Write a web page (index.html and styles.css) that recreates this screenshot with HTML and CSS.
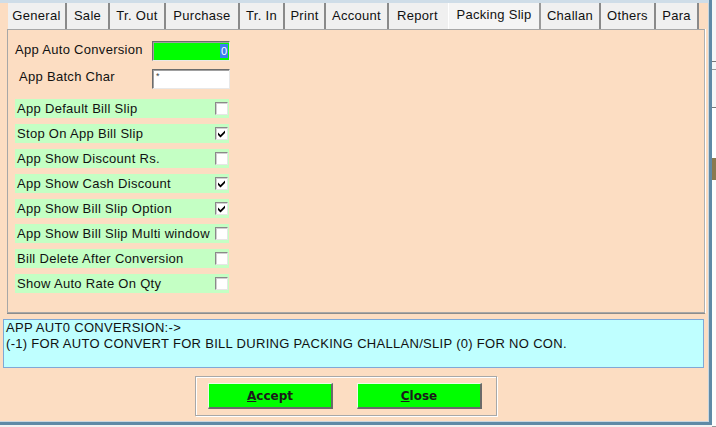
FILE: index.html
```html
<!DOCTYPE html>
<html>
<head>
<meta charset="utf-8">
<link rel="stylesheet" href="styles.css">
</head>
<body>
<div class="screen">
  <div class="window">
    <div class="topstrip"></div>
    <div class="tabs">
      <div class="tab t1">General</div>
      <div class="tab t2">Sale</div>
      <div class="tab t3">Tr. Out</div>
      <div class="tab t4">Purchase</div>
      <div class="tab t5">Tr. In</div>
      <div class="tab t6">Print</div>
      <div class="tab t7">Account</div>
      <div class="tab t8 before-sel">Report</div>
      <div class="tab t9 selected">Packing Slip</div>
      <div class="tab t10">Challan</div>
      <div class="tab t11">Others</div>
      <div class="tab t12">Para</div>
    </div>
    <div class="panel">
      <div class="field-row">
        <span class="label">App Auto Conversion</span>
        <div class="input green"><span class="sel">0</span></div>
      </div>
      <div class="field-row second">
        <span class="label indent">App Batch Char</span>
        <div class="input white"><span class="star">*</span></div>
      </div>
      <div class="checks">
        <div class="check-row"><span>App Default Bill Slip</span><span class="box"></span></div>
        <div class="check-row"><span>Stop On App Bill Slip</span><span class="box checked"><svg viewBox="0 0 11 11"><path d="M2 4.5 L4.5 7 L9 2.5 L9 5 L4.5 9.5 L2 7 Z" fill="#000"/></svg></span></div>
        <div class="check-row"><span>App Show Discount Rs.</span><span class="box"></span></div>
        <div class="check-row"><span>App Show Cash Discount</span><span class="box checked"><svg viewBox="0 0 11 11"><path d="M2 4.5 L4.5 7 L9 2.5 L9 5 L4.5 9.5 L2 7 Z" fill="#000"/></svg></span></div>
        <div class="check-row"><span>App Show Bill Slip Option</span><span class="box checked"><svg viewBox="0 0 11 11"><path d="M2 4.5 L4.5 7 L9 2.5 L9 5 L4.5 9.5 L2 7 Z" fill="#000"/></svg></span></div>
        <div class="check-row"><span>App Show Bill Slip Multi window</span><span class="box"></span></div>
        <div class="check-row"><span>Bill Delete After Conversion</span><span class="box"></span></div>
        <div class="check-row"><span>Show Auto Rate On Qty</span><span class="box"></span></div>
      </div>
    </div>
    <div class="info">
      <div>APP AUT0 CONVERSION:-&gt;</div>
      <div>(-1) FOR AUTO CONVERT FOR BILL DURING PACKING CHALLAN/SLIP (0) FOR NO CON.</div>
    </div>
    <div class="btnframe">
      <button class="btn"><u>A</u>ccept</button>
      <button class="btn"><u>C</u>lose</button>
    </div>
  </div>
  <div class="outside">
    <div class="o-a"></div>
    <div class="o-b"></div>
    <div class="o-c"></div>
    <div class="o-d"></div>
    <div class="o-e"></div>
  </div>
</div>
</body>
</html>
```
FILE: styles.css
```css
html, body {
  margin: 0;
  padding: 0;
}
body {
  width: 716px;
  height: 427px;
  overflow: hidden;
  font-family: "Liberation Sans", Arial, sans-serif;
  background: #f2f2f2;
}
.screen {
  display: flex;
  width: 716px;
  height: 427px;
}
.window {
  width: 709px;
  height: 422px;
  flex: none;
  background: #fcddc2;
  border-right: 3px solid #5f8aa6;
  border-bottom: 3px solid #5f8aa6;
  box-shadow: inset -1px -1px 0 #c8d6e0;
  display: flex;
  flex-direction: column;
}
.topstrip {
  height: 3px;
  background: #cfdde8;
}
.tabs {
  display: flex;
  height: 26px;
  margin-left: 8px;
  width: 691px;
  background: #f0f0f0;
}
.tab {
  box-sizing: border-box;
  height: 26px;
  font-size: 13px;
  letter-spacing: 0.3px;
  line-height: 26px;
  text-align: center;
  color: #111;
  border-right: 2px solid #8a8a8a;
  white-space: nowrap;
}
.t1 { width: 59px; }
.t2 { width: 43px; }
.t3 { width: 56px; }
.t4 { width: 74px; }
.t5 { width: 45px; }
.t6 { width: 41px; }
.t7 { width: 63px; }
.t8 { width: 59px; }
.t9 { width: 93px; }
.t10 { width: 60px; }
.t11 { width: 55px; }
.t12 { width: 43px; }
.before-sel { border-right-color: #f0f0f0; }
.selected {
  line-height: 24px;
  background: #f4f4f4;
  border-right: 2px solid #9a9a9a;
  border-left: 1px solid #fff;
}
.panel {
  box-sizing: border-box;
  margin-left: 7px;
  width: 698px;
  height: 284px;
  border: 1px solid #a7a7a7;
  border-right-color: #b0b0b0;
  box-shadow: 1px 0 0 #fff, 0 1px 0 #8c8c8c;
  padding: 11px 0 0 7px;
}
.field-row {
  display: flex;
  align-items: flex-start;
  height: 20px;
}
.field-row.second {
  margin-top: 8px;
}
.label {
  width: 137px;
  font-size: 13px;
  letter-spacing: 0.3px;
  line-height: 17px;
  color: #111;
  white-space: nowrap;
}
.label.indent {
  padding-left: 4px;
  width: 133px;
  line-height: 15px;
}
.input {
  box-sizing: border-box;
  width: 78px;
  height: 20px;
  border-top: 1px solid #6c6c6c;
  border-left: 1px solid #6c6c6c;
  border-right: 1px solid #e8e8e8;
  border-bottom: 1px solid #e8e8e8;
  box-shadow: inset 1px 1px 0 #a0a0a0;
  display: flex;
}
.input.green {
  background: #00ff00;
  justify-content: flex-end;
  align-items: center;
  padding-right: 1px;
}
.sel {
  background: #3a7ff0;
  color: #fff;
  font-size: 11px;
  line-height: 14px;
  padding: 0 1px;
}
.input.white {
  background: #fff;
  padding: 2px 0 0 3px;
}
.star {
  font-size: 9px;
  line-height: 9px;
  color: #444;
}
.checks {
  margin-top: 10px;
  display: flex;
  flex-direction: column;
  gap: 6px;
}
.check-row {
  box-sizing: border-box;
  width: 214px;
  height: 19px;
  background: #c4ffc4;
  display: flex;
  align-items: center;
  justify-content: space-between;
  padding: 0 1px 0 2px;
  font-size: 13px;
  letter-spacing: 0.3px;
  color: #111;
  white-space: nowrap;
}
.box {
  box-sizing: border-box;
  width: 13px;
  height: 13px;
  flex: none;
  background: #fff;
  border-top: 1px solid #8a8a8a;
  border-left: 1px solid #8a8a8a;
  border-right: 1px solid #e6e6e6;
  border-bottom: 1px solid #e6e6e6;
  box-shadow: inset 1px 1px 0 #d0d0d0;
  display: flex;
}
.box svg {
  width: 11px;
  height: 11px;
}
.info {
  box-sizing: border-box;
  margin: 6px 0 0 3px;
  width: 701px;
  height: 49px;
  background: #bfffff;
  border: 1px solid #7fa8d6;
  padding: 0 0 0 2px;
  font-size: 13px;
  letter-spacing: 0.3px;
  line-height: 16px;
  color: #111;
  white-space: nowrap;
}
.btnframe {
  box-sizing: border-box;
  margin: 8px 0 0 195px;
  width: 302px;
  height: 40px;
  border: 1px solid #a8a8a8;
  box-shadow: inset 1px 1px 0 #fff, 1px 1px 0 #fff;
  display: flex;
  gap: 24px;
  padding: 6px 0 0 12px;
}
.btn {
  box-sizing: border-box;
  width: 125px;
  height: 26px;
  background: #00ff00;
  border: none;
  border-top: 1px solid #e8ffe8;
  border-left: 1px solid #e8ffe8;
  border-right: 2px solid #6a6a6a;
  border-bottom: 2px solid #6a6a6a;
  font-family: "DejaVu Sans", Verdana, sans-serif;
  font-weight: bold;
  font-size: 12px;
  color: #1a1a1a;
  padding: 0;
}
.outside {
  flex: 1;
  background: #f6f6f6;
  display: flex;
  flex-direction: column;
}
.o-a { height: 61px; border-bottom: 1px solid #777; }
.o-b { height: 7px; border-bottom: 1px solid #999; }
.o-c { height: 37px; border-bottom: 1px solid #777; }
.o-d { height: 50px; background: #fff; border-bottom: 22px solid #8a7a50; }
.o-e { flex: 1; background: #fdfdfd; border-bottom: 1px solid #999; }
```
